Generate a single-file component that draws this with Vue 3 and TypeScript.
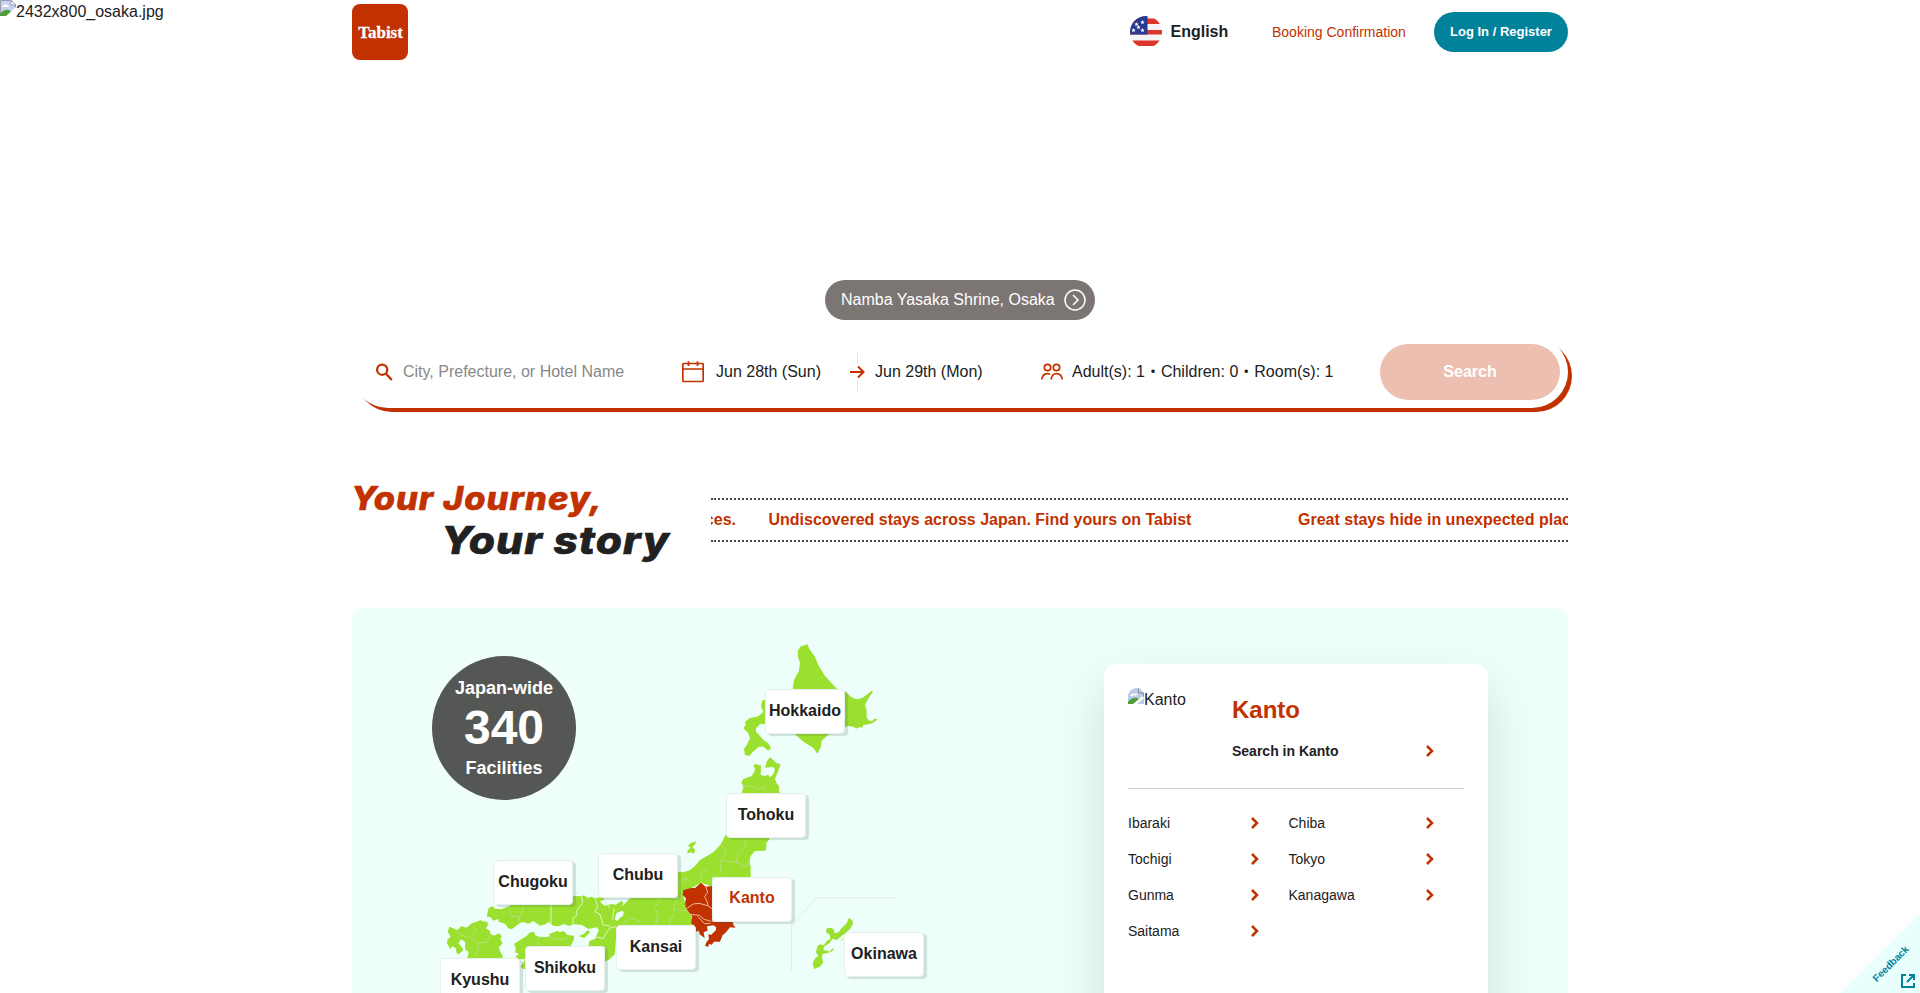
<script setup lang="ts">
interface Pin { name: string; key: string; active?: boolean }

const pins: Pin[] = [
  { name: 'Hokkaido', key: 'hokkaido' },
  { name: 'Tohoku', key: 'tohoku' },
  { name: 'Chubu', key: 'chubu' },
  { name: 'Chugoku', key: 'chugoku' },
  { name: 'Kanto', key: 'kanto', active: true },
  { name: 'Kansai', key: 'kansai' },
  { name: 'Okinawa', key: 'okinawa' },
  { name: 'Shikoku', key: 'shikoku' },
  { name: 'Kyushu', key: 'kyushu' },
]

const prefectures: string[] = ['Ibaraki', 'Chiba', 'Tochigi', 'Tokyo', 'Gunma', 'Kanagawa', 'Saitama']
</script>

<template>
  <div class="page">
    <div class="hero-alt">
      <svg class="broken" viewBox="0 0 16 16"><path d="M0 0H11L16 5V16H0Z" fill="#c3d2ee" /><path d="M.5 16V.5H11L15.500 5V10" fill="none" stroke="#9a9eaa" /><path d="M2 7Q2 5 4 5Q5 3 7 5Q9 5 9 7Z" fill="#fff" /><path d="M0 16V14Q4 9 9 10L12 12L8 16Z" fill="#4f9e3d" /><path d="M6 16L16 7V16Z" fill="#fff" /><path d="M11 0V5H16Z" fill="#fff" stroke="#9a9eaa" /></svg>
      <span>2432x800_osaka.jpg</span>
    </div>

    <header class="header">
      <svg class="logo" viewBox="0 0 56 56"><rect width="56" height="56" rx="8" fill="#c13200" /><text x="6.300" y="34" textLength="44.500" lengthAdjust="spacingAndGlyphs">Tabist</text></svg>
      <nav class="nav">
        <svg class="flag" viewBox="0 0 32 32">
          <defs><clipPath id="flagClip"><circle cx="16" cy="16" r="16" /></clipPath></defs>
          <g clip-path="url(#flagClip)">
            <rect width="32" height="32" fill="#f4f4f6" />
            <path d="M0 2.500H32V8H0ZM0 14H32V18.500H0ZM0 24.500H32V30H0Z" fill="#dc352c" />
            <path d="M0 30H32V32H0Z" fill="#fff" />
            <path d="M0 0H17.500V18.500H0Z" fill="#2b3990" />
            <g fill="#fff"><path id="star" d="M12.500 4l.6 1.500 1.600.1-1.200 1 .4 1.600-1.400-.9-1.400.9.4-1.600-1.200-1 1.600-.1Z" /><use href="#star" x="-6" y="2" /><use href="#star" x="-4" y="5" /><use href="#star" x="0" y="8" /><use href="#star" x="-9" y="8" /></g>
          </g>
        </svg>
        <span class="lang">English</span>
        <a class="booking">Booking Confirmation</a>
        <button class="login">Log In / Register</button>
      </nav>
    </header>

    <div class="spot">
      <span>Namba Yasaka Shrine, Osaka</span>
      <svg viewBox="0 0 22 22"><circle cx="11" cy="11" r="10" /><path d="M9 6L14 11L9 16" /></svg>
    </div>

    <div class="search">
      <div class="field place">
        <svg width="18" height="18" viewBox="0 0 18 18"><circle cx="7.200" cy="6.700" r="5.100" /><path d="M10.800 10.500L16.800 17" /></svg>
        <span>City, Prefecture, or Hotel Name</span>
      </div>
      <div class="field checkin">
        <svg width="22" height="22" viewBox="0 0 22 22"><rect x=".8" y="2.500" width="20.400" height="18" rx="1" /><path d="M1 8H21M6.500 .3V5M15.500 .3V5" /></svg>
        <span>Jun 28th (Sun)</span>
      </div>
      <div class="field checkout">
        <svg width="14" height="40" viewBox="0 0 14 40"><path class="rule" d="M7.500 0V40" /><path class="gap" d="M7.500 13V27" /><path d="M0 20H13M8 14.500L13.500 20L8 25.500" /></svg>
        <span>Jun 29th (Mon)</span>
      </div>
      <div class="field guests">
        <svg width="22" height="18" viewBox="0 0 22 18"><circle cx="6.500" cy="4.500" r="3.200" /><circle cx="15.500" cy="4.500" r="3.200" /><path d="M.8 16.500Q1.500 11 6 10.700Q8 10.500 9 11.500M10 16.500Q11 10.700 15.500 10.700Q20.500 10.700 21.200 16.500" /></svg>
        <span>Adult(s): 1・Children: 0・Room(s): 1</span>
      </div>
      <button class="go">Search</button>
    </div>

    <section class="story">
      <svg class="tagline" viewBox="0 0 330 100"><text x="-1" y="38" class="one" textLength="252" lengthAdjust="spacingAndGlyphs">Your Journey,</text><text x="89" y="82" class="two" textLength="229" lengthAdjust="spacingAndGlyphs">Your story</text></svg>
      <div class="ticker">
        <span class="tail">Great stays hide in unexpected places.</span>
        <span class="msg">Undiscovered stays across Japan. Find yours on Tabist</span>
        <span>Great stays hide in unexpected places.</span>
      </div>
    </section>

    <section class="area">
      <div class="total"><span>Japan-wide</span><strong>340</strong><span>Facilities</span></div>

      <div class="map">
        <svg class="japan" viewBox="430 640 520 360">
          <g class="land" transform="translate(700 630) scale(.33333)">
            <path d="M322 42L328 57 345 80 355 105 375 138 395 160 412 178 437 185 455 202 470 208 487 204 518 180 517 188 506 204 495 225 500 240 500 262 507 272 518 272 522 266 533 267 520 278 505 283 490 285 486 294 480 291 468 296 462 291 445 288 437 290 384 315 365 332 362 352 352 371 340 354 310 335 285 312 278 178 282 150 297 122 300 98 294 80 293 62 303 48 315 46Z" />
            <path d="M196 209L186 212 183 230 190 245 175 259 150 264 142 270 135 275 137 285 130 295 145 310 150 325 140 345 132 357 135 375 148 378 158 366 165 360 177 350 190 350 205 362 213 355 205 340 190 330 180 318 168 305 168 295 180 283 198 281Z" />
            <path d="M210 382L220 390 230 400 242 402 235 422 225 447 230 460 237 468 237 483 242 494H124L130 470 124 458 130 447 155 438 163 426 165 415 160 407 166 402 183 407 182 435 195 438 205 434 210 442 220 432 225 418 218 411 195 413 200 395Z" />
            <path class="border" d="M128 465L150 468 173 478 190 471 197 484" />
          </g>
          <g class="land" transform="translate(640 800) scale(.33333)">
            <path d="M258 103L242 133 225 152 210 163 180 180 164 199 150 210 130 217 112 215V295L0 292V377H160L155 350 138 320 128 280 183 248 217 260V232H332L332 200 329 188 332 168 345 153 375 152 379 145 379 130 388 118 388 108Z" />
            <path d="M168 124L153 128 144 137 152 143 141 154 144 160 154 157 161 162 166 150 157 142 166 132Z" />
            <path d="M627 353L638 362 638 374 630 387 616 400 600 412 590 420 578 416 568 430 552 440 550 451 565 452 567 459 549 461 545 470 550 487 540 500 522 507 518 490 525 475 535 467 528 457 530 447 533 437 541 433 552 436 560 423 571 417 570 405 558 397 560 385 574 383 581 388 584 400 596 397 604 385 620 370Z" />
            <path d="M568 455L580 443 580 450 572 457ZM603 422L608 416 610 420Z" />
            <path class="border" d="M315 120L318 137 293 168 288 185 305 193 317 201 328 177M250 140L258 160 240 185 244 218M290 188L240 180M205 205L182 217 184 248M60 294L45 325 52 342 47 374M114 247L130 245 133 235 150 242M100 345L87 365 90 375M116 294L103 315 100 330 138 332 158 342" />
            <path class="kanto" d="M130 270L154 264 165 264 183 248 197 260 217 258V365H278L280 374 287 383 270 382 256 399 248 405 240 425 222 425 215 434 207 432 205 440 195 438 200 425 207 418 205 403 214 404 228 390 228 381 220 376 201 379 203 392 191 397 194 415 185 407 180 404 176 392 167 395 165 378 153 370 157 350 138 325 135 310 138 295 128 285Z" />
            <path class="kborder" d="M197 260L203 277 194 290 202 306 204 318 216 326M138 327L160 312 177 310 203 317M151 343L178 346 192 358 214 364M174 350L193 371 211 370" />
            <path class="route" d="M455 515V375L530 293H768" />
          </g>
          <g class="land" transform="translate(430 820) scale(.33333)">
            <path d="M170 290L176 264 188 258 195 266 215 268 240 257 250 245H428L428 228 455 229 462 226 475 235 482 230 498 235 515 230 524 237 510 245 523 257 545 252 558 254 574 242 580 250 575 260 600 235 632 232V320H560L555 402 540 417 525 425V380H475L478 363 495 357 507 330 499 322 475 327 456 315 430 313 415 318 403 312 385 319 370 317 355 305 348 312 330 317 310 303 295 311 280 306 270 309 245 328 235 325 225 311 206 305 205 297 190 302 182 292Z" />
            <path d="M445 348L460 343 474 330 480 337 463 354Z" />
            <path d="M58 320L70 325 82 331 94 318 110 323 125 310 137 306 152 300 157 304 172 305 174 315 168 325 180 333 181 342 194 347 205 340 216 348 211 358 218 370 207 382 211 397 217 404 218 418H110L116 400 112 391 108 393 105 380 106 366 93 358 85 370 98 384 99 391 86 403 80 400 77 384 66 379 61 388 51 370 52 359 62 350 53 335Z" />
            <path d="M252 372L275 357 290 348 298 338 312 335 316 346 327 350 344 352 360 349 357 342 372 337 384 332 388 337 402 333 412 345 432 347 432 358 422 379V443L280 447 272 440 286 418 267 418 256 410 267 402 256 397 257 383Z" />
            <path class="border" d="M237 260L242 288 266 290 266 303 281 257M580 310L603 295 632 303M81 336L97 344 112 354M130 317L138 332 119 351 143 368 170 368 183 341M142 370L147 388 131 407M326 352L321 370 330 378M360 352L385 359 410 354" />
            <path class="border solid" d="M363 255V311M455 229L458 248 441 271 440 288 430 292 429 312M495 235L503 260 495 275 510 283 519 315 540 318M494 350L520 356 526 343 539 324 557 320M524 244L540 265M552 266L548 300" />
            <path class="water" d="M554 298L560 279 577 272 581 277 579 288 570 293 562 303Z" />
          </g>
        </svg>
        <a v-for="pin in pins" :key="pin.key" class="pin" :class="[pin.key, { active: pin.active }]">{{ pin.name }}</a>
      </div>

      <div class="card">
        <div class="card-head">
          <div class="thumb">
            <svg class="broken" viewBox="0 0 16 16"><path d="M0 16V7Q2 1 8 0H11L16 5V16Z" fill="#bccbe8" /><path d="M2 8Q3 5 6 6Q8 4 10 7Z" fill="#fff" /><path d="M0 16V14Q4 9 9 10L12 12L8 16Z" fill="#4f9e3d" /><path d="M5 16L16 7V10L9 16Z" fill="#fff" /><path d="M10.500 .5V5H15.500V9" fill="none" stroke="#8b8f9a" /></svg>
            <span>Kanto</span>
          </div>
          <div class="region">
            <h2>Kanto</h2>
            <a class="all"><span>Search in Kanto</span><svg class="chev" viewBox="0 0 8 12"><path d="M1 1L6 6L1 11" /></svg></a>
          </div>
        </div>
        <div class="prefs">
          <a v-for="name in prefectures" :key="name"><span>{{ name }}</span><svg class="chev" viewBox="0 0 8 12"><path d="M1 1L6 6L1 11" /></svg></a>
        </div>
      </div>
    </section>

    <div class="feedback">
      <span>Feedback</span>
      <svg viewBox="0 0 16 16"><path d="M6 2H2V14H14V10M9 2H14V7M14 2L7 9" /></svg>
    </div>
  </div>
</template>

<style>
body { margin: 0; background: #fff; overflow: hidden; }
</style>

<style scoped>
* { box-sizing: border-box; }
.page { position: relative; width: 1920px; height: 993px; overflow: hidden; background: #fff; color: #212121; font: 16px/24px "Liberation Sans", "Noto Sans CJK JP", sans-serif; }
button { border: 0; font-family: inherit; font-weight: 700; color: #fff; padding: 0; }
.hero-alt { position: absolute; left: 0; top: 0; display: flex; line-height: 23px; }
.broken { width: 16px; height: 16px; flex: none; }
.header { width: 1216px; height: 64px; margin: 0 auto; display: flex; justify-content: space-between; align-items: center; }
.logo { width: 56px; height: 56px; }
.logo text { font: 700 17.500px "Liberation Serif", serif; fill: #fff; stroke: #fff; stroke-width: .3; }
.nav { display: flex; align-items: center; }
.flag { width: 32px; height: 32px; margin-right: 8.500px; }
.lang { width: 101.500px; font-weight: 700; }
.booking { width: 162px; font-size: 14px; color: #c13200; }
.login { width: 134px; height: 40px; padding-bottom: 1px; border-radius: 20px; background: #00829b; font-size: 13px; }
.spot { width: 270px; height: 40px; margin: 216px auto 0; padding: 0 9px 0 16px; border-radius: 20px; background: #7b7573; color: #fff; display: flex; align-items: center; justify-content: space-between; }
.spot svg { width: 22px; height: 22px; fill: none; stroke: #fff; stroke-width: 1.500; }
.search { width: 1216px; height: 72px; margin: 16px auto 0; padding: 0 8px 0 23px; border-radius: 36px; background: #fff; box-shadow: 4px 4px 0 #c13200; display: flex; align-items: center; }
.field { display: flex; align-items: center; white-space: nowrap; }
.field svg { fill: none; stroke: #c13200; stroke-width: 1.700; flex: none; }
.place { width: 307px; gap: 10px; color: #888; }
.place svg { stroke-width: 2.300; }
.checkin { width: 168px; gap: 12px; }
.checkout { width: 191px; gap: 11px; }
.checkout svg { stroke-width: 2; overflow: visible; }
.field .rule { stroke: #e9e9e9; stroke-width: 1; }
.field .gap { stroke: #fff; stroke-width: 3; }
.guests { gap: 9px; }
.go { width: 180px; height: 56px; margin-left: auto; border-radius: 28px; background: #edbfb1; font-size: 16px; }
.story { width: 1216px; height: 100px; margin: 64px auto 0; display: flex; }
.tagline { width: 330px; height: 100px; flex: none; overflow: visible; }
.tagline text { font-family: Inter, sans-serif; font-style: italic; font-weight: 800; letter-spacing: 1px; stroke-width: .6; }
.one { font-size: 32px; fill: #c13200; stroke: #c13200; }
.two { font-size: 38px; fill: #212121; stroke: #212121; }
.ticker { width: 857px; height: 44px; margin: 26px 0 0 29px; border-top: 2px dotted #444; border-bottom: 2px dotted #444; overflow: hidden; display: flex; align-items: center; color: #c13200; font-weight: 700; white-space: nowrap; }
.ticker span { flex: none; }
.ticker .tail { width: 25px; display: flex; justify-content: flex-end; overflow: hidden; }
.msg { width: 529.500px; margin-left: 32.500px; }
.area { position: relative; width: 1216px; height: 420px; margin: 36px auto 0; border-radius: 12px; background: #eefffb; display: flex; overflow: hidden; }
.total { position: absolute; z-index: 2; left: 80px; top: 48px; width: 144px; height: 144px; border-radius: 50%; background: #555755; color: #fff; display: flex; flex-direction: column; align-items: center; padding-top: 20px; font-size: 18px; font-weight: 700; }
.total strong { font-size: 48px; line-height: 56px; }
.map { position: relative; width: 520px; height: 360px; margin: 32px 0 0 78px; flex: none; }
.japan { display: block; width: 520px; height: 360px; }
.land { fill: #9be02f; }
.border { fill: none; stroke: #c9dcae; stroke-width: 2.400; stroke-dasharray: 7 3; }
.border.solid { stroke: #dff2c4; stroke-width: 3; stroke-dasharray: none; }
.kanto { fill: #c13200; }
.kborder { fill: none; stroke: #eab9a5; stroke-width: 3; }
.route { fill: none; stroke: #e0eeea; stroke-width: 3; }
.water { fill: #eefffb; }
.pin { position: absolute; width: 80px; height: 45px; border: 1px solid #e6efec; border-radius: 4px; background: #fff; box-shadow: 3px 2px 1px rgba(60, 90, 85, .18); text-align: center; line-height: 42px; font-weight: 700; }
.pin.active { color: #c13200; }
.hokkaido { left: 335px; top: 49px; }
.tohoku { left: 296px; top: 153px; }
.chubu { left: 168px; top: 213px; }
.chugoku { left: 63px; top: 220px; }
.kanto.pin { left: 282px; top: 237px; line-height: 40px; }
.kansai { left: 186px; top: 285px; }
.okinawa { left: 414px; top: 292px; }
.shikoku { left: 95px; top: 306px; }
.kyushu { left: 10px; top: 318px; }
.card { width: 384px; height: 440px; margin: 56px 0 0 154px; flex: none; padding: 24px; border-radius: 12px; background: #fff; box-shadow: 0 24px 48px rgba(0, 0, 0, .13); }
.card-head { height: 101px; border-bottom: 1px solid #ccc; display: flex; }
.thumb { width: 104px; display: flex; line-height: 23px; }
.region { flex: 1; }
h2 { margin: 6px 0 0; font-size: 24px; line-height: 32px; color: #c13200; }
.all { display: flex; justify-content: space-between; margin-top: 13px; padding-right: 30px; font-size: 14px; font-weight: 700; align-items: center; }
.chev { width: 8px; height: 12px; fill: none; stroke: #c13200; stroke-width: 2.500; }
.prefs { display: grid; grid-template-columns: 131px 145.500px; grid-auto-rows: 36px; column-gap: 29.500px; margin-top: 16px; font-size: 14px; }
.prefs a { display: flex; align-items: center; justify-content: space-between; }
.feedback { position: absolute; right: 0; bottom: 0; width: 80px; height: 80px; background: #e9fffd; clip-path: polygon(100% 0, 100% 100%, 0 100%); color: #00829b; }
.feedback span { position: absolute; left: 26px; top: 45px; width: 50px; line-height: 12px; text-align: center; font-size: 10px; font-weight: 700; transform: rotate(-45deg); }
.feedback svg { position: absolute; right: 4px; bottom: 4px; width: 16px; height: 16px; fill: none; stroke: #00829b; stroke-width: 2; }
</style>
